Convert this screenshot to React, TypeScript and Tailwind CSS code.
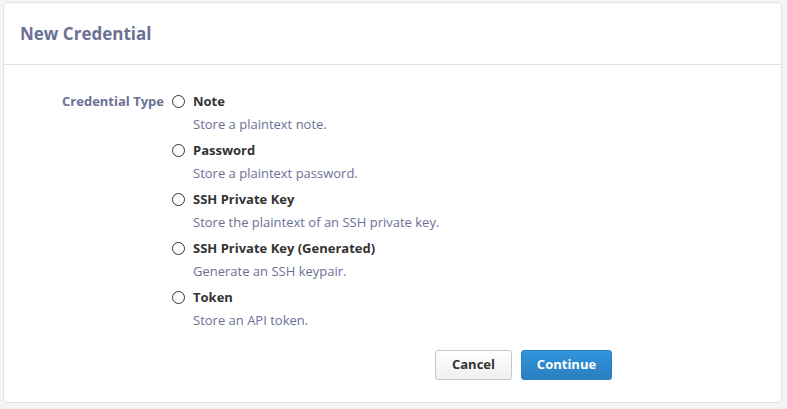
const options = [
  { title: 'Note', desc: 'Store a plaintext note.' },
  { title: 'Password', desc: 'Store a plaintext password.' },
  { title: 'SSH Private Key', desc: 'Store the plaintext of an SSH private key.' },
  { title: 'SSH Private Key (Generated)', desc: 'Generate an SSH keypair.' },
  { title: 'Token', desc: 'Store an API token.' },
];

export default function App() {
  return (
    <div className="h-[409px] w-[787px] bg-[#f3f4f6] pl-[3px] pt-[2px] font-['Open_Sans',sans-serif]">
      <div className="flex h-[401px] w-[779px] flex-col rounded-[5px] border border-[#e2e3e6] bg-white">
        <div className="flex h-[62px] items-center border-b border-[#dfe0e3] px-[16px] pt-[1px]">
          <h1 className="text-[17px] font-bold text-[#6b7194]">New Credential</h1>
        </div>
        <div className="flex pt-[27px]">
          <div className="w-[160px] text-right text-[13px] font-bold leading-[18px] text-[#6b7194]">
            Credential Type
          </div>
          <div className="ml-[8px] flex flex-col">
            {options.map((o) => (
              <label key={o.title} className="flex h-[49px] items-start gap-[8px]">
                <span className="mt-[3px] block h-[13px] w-[13px] rounded-full border border-[#333] bg-white" />
                <span className="flex flex-col">
                  <span className="text-[13px] font-bold leading-[18px] text-[#333]">{o.title}</span>
                  <span className="mt-[5px] text-[13px] leading-[18px] text-[#6b7194]">{o.desc}</span>
                </span>
              </label>
            ))}
            <div className="mt-[13px] flex gap-[9px] pl-[263px]">
              <button className="h-[30px] w-[77px] rounded-[3px] border border-[#c4c7cc] bg-gradient-to-b from-white to-[#eeeff1] text-[13px] font-bold text-[#333]">
                Cancel
              </button>
              <button className="h-[30px] w-[91px] rounded-[3px] border border-[#2a7cba] bg-gradient-to-b from-[#3295dc] to-[#2a7fbf] text-[13px] font-bold text-white">
                Continue
              </button>
            </div>
          </div>
        </div>
      </div>
    </div>
  );
}
